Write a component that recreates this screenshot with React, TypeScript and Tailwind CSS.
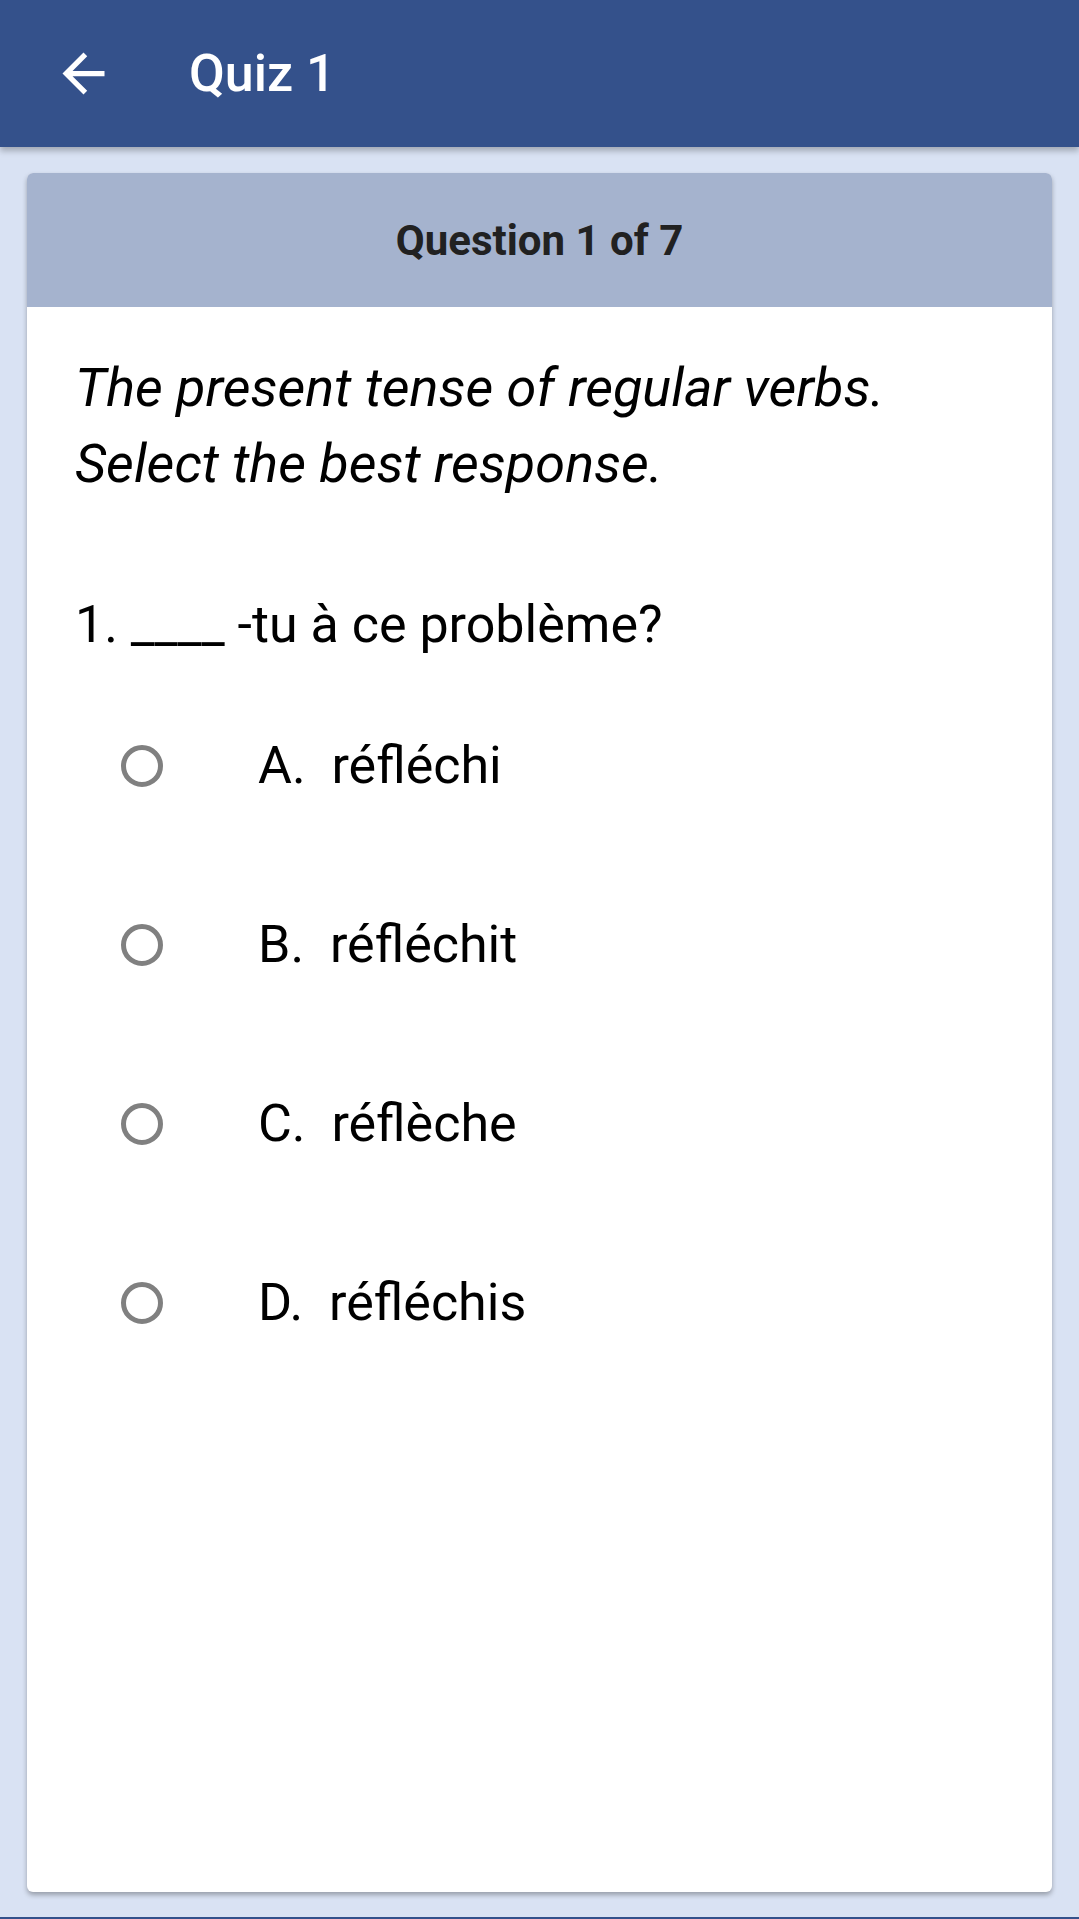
import React, { useState } from 'react';

const options = [
  { key: 'A', text: 'réfléchi' },
  { key: 'B', text: 'réfléchit' },
  { key: 'C', text: 'réflèche' },
  { key: 'D', text: 'réfléchis' },
];

const App: React.FC = () => {
  const [selected, setSelected] = useState<string | null>(null);

  return (
    <div className="min-h-[1919px] bg-[#d9e2f3] flex flex-col font-['Roboto',sans-serif] border-b-2 border-[#34518b]">
      {/* Toolbar */}
      <div className="h-[147px] bg-[#34518b] flex items-center shadow-[0_4px_6px_rgba(0,0,0,0.25)] relative z-10">
        <button className="ml-[52px] w-[63px] h-[63px] text-white">
          <svg viewBox="0 0 24 24" className="w-[63px] h-[63px]" fill="currentColor">
            <path d="M20 11H7.83l5.59-5.59L12 4l-8 8 8 8 1.41-1.41L7.83 13H20v-2z" />
          </svg>
        </button>
        <h1 className="ml-[74px] text-white text-[52px] font-medium leading-none">Quiz 1</h1>
      </div>

      {/* Card */}
      <div className="mx-[27px] mt-[26px] h-[1719px] bg-white rounded-[6px] overflow-hidden shadow-[0_3px_5px_rgba(0,0,0,0.3)] flex flex-col">
        <div className="h-[134px] shrink-0 bg-[#a5b3ce] flex items-center justify-center">
          <span className="text-[42px] font-bold text-[#212121]">Question 1 of 7</span>
        </div>

        <div className="pl-[48px] pr-[40px] pt-[43px] text-black">
          <p className="italic text-[54px] leading-[76px]">The present tense of regular verbs.</p>
          <p className="italic text-[54px] leading-[76px]">Select the best response.</p>

          <p className="mt-[87px] text-[52px] leading-[72px]">1. ____ -tu à ce problème?</p>

          <div className="mt-[15px] flex flex-col">
            {options.map(o => (
              <button
                key={o.key}
                onClick={() => setSelected(o.key)}
                className="h-[179px] flex items-center text-left"
              >
                <span className="ml-[46px] w-[42px] h-[42px] rounded-full border-[5px] border-[#808080] flex items-center justify-center shrink-0">
                  {selected === o.key && <span className="w-[20px] h-[20px] rounded-full bg-[#808080]" />}
                </span>
                <span className="ml-[95px] text-[52px] leading-none whitespace-pre">{o.key}.  {o.text}</span>
              </button>
            ))}
          </div>
        </div>
      </div>
    </div>
  );
};

export default App;
